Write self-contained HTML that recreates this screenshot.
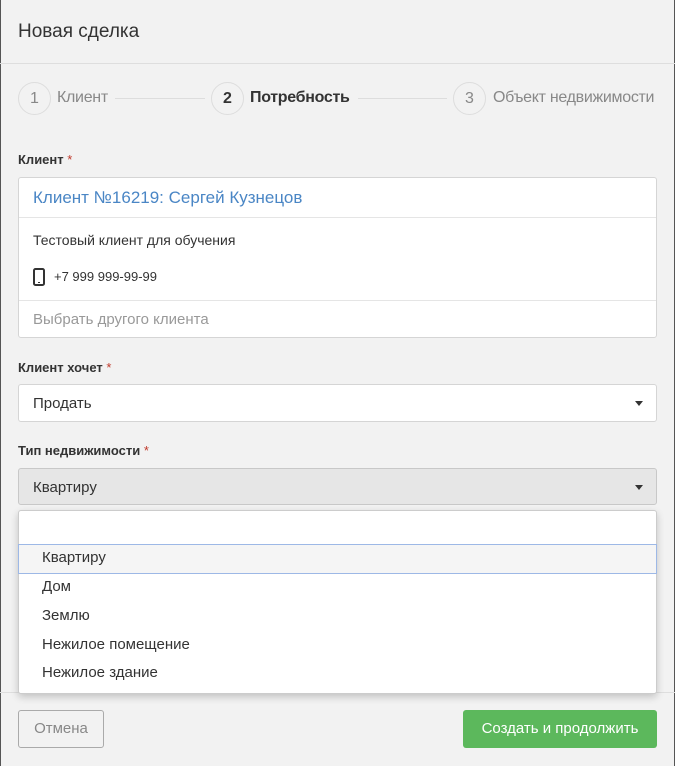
<!DOCTYPE html>
<html><head><meta charset="utf-8"><style>
*{box-sizing:border-box;margin:0;padding:0}
body{width:675px;height:766px;background:#f2f2f2;font-family:"Liberation Sans",sans-serif;color:#333;position:relative;overflow:hidden}
.a{position:absolute}
.hr{position:absolute;left:0;right:0;height:1px;background:#dedede}
.circ{position:absolute;width:33px;height:33px;border:1px solid #ddd;border-radius:50%;top:82px;text-align:center;line-height:31px;font-size:16px;color:#888}
.st{position:absolute;top:89px;font-size:16px;color:#888;letter-spacing:-0.3px}
.line{position:absolute;top:98px;height:1px;background:#ddd}
.lbl{position:absolute;left:18px;font-size:13px;font-weight:bold;color:#333}
.lbl span{color:#c0392b;font-weight:normal}
.box{position:absolute;left:18px;width:639px;border:1px solid #d5d5d5;border-radius:3px;background:#fff}
.caret{position:absolute;right:13px;top:16px;width:0;height:0;border-left:4px solid transparent;border-right:4px solid transparent;border-top:5px solid #333}
.it{position:absolute;left:23px;font-size:15px;color:#333}
</style></head><body>
<div class="a" style="left:0;top:0;width:1px;height:766px;background:#555"></div>
<div class="a" style="right:0;top:0;width:1px;height:766px;background:#555"></div>
<div class="a" style="left:18px;top:21px;font-size:19px;color:#333">Новая сделка</div>
<div class="hr" style="top:63px"></div>
<div class="circ" style="left:18px">1</div><div class="st" style="left:57px">Клиент</div>
<div class="line" style="left:115px;width:90px"></div>
<div class="circ" style="left:211px;color:#333;font-weight:bold">2</div><div class="st" style="left:250px;color:#333;font-weight:bold">Потребность</div>
<div class="line" style="left:358px;width:89px"></div>
<div class="circ" style="left:453px">3</div><div class="st" style="left:493px">Объект недвижимости</div>

<div class="lbl" style="top:152px">Клиент <span>*</span></div>
<div class="box" style="top:177px;height:161px">
 <div class="a" style="left:14px;top:10px;font-size:17px;color:#4a86c5">Клиент №16219: Сергей Кузнецов</div>
 <div class="a" style="left:0;right:0;top:39px;height:1px;background:#e5e5e5"></div>
 <div class="a" style="left:14px;top:54px;font-size:14px">Тестовый клиент для обучения</div>
 <svg class="a" style="left:14px;top:90px" width="12" height="18" viewBox="0 0 12 18"><rect x="1" y="1" width="10" height="16" rx="1.5" fill="none" stroke="#333" stroke-width="2"/><rect x="5" y="14" width="2" height="1" fill="#333"/></svg>
 <div class="a" style="left:35px;top:91px;font-size:13px">+7 999 999-99-99</div>
 <div class="a" style="left:0;right:0;top:122px;height:1px;background:#e5e5e5"></div>
 <div class="a" style="left:14px;top:133px;font-size:15px;color:#999">Выбрать другого клиента</div>
</div>

<div class="lbl" style="top:360px">Клиент хочет <span>*</span></div>
<div class="box" style="top:384px;height:38px"><div class="a" style="left:14px;top:10px;font-size:15px">Продать</div><div class="caret"></div></div>

<div class="lbl" style="top:443px">Тип недвижимости <span>*</span></div>
<div class="box" style="top:468px;height:37px;background:#e6e6e6;border-color:#c8c8c8"><div class="a" style="left:14px;top:10px;font-size:15px">Квартиру</div><div class="caret"></div></div>

<div class="hr" style="top:692px"></div>
<div class="box" style="top:510px;height:184px;box-shadow:0 3px 8px rgba(0,0,0,.2);border-color:#ccc">
 <div class="a" style="left:-1px;right:-1px;top:33px;height:30px;background:#f5f5f5;border:1px solid #9db8e6"></div>
 <div class="it" style="top:38px">Квартиру</div>
 <div class="it" style="top:67px">Дом</div>
 <div class="it" style="top:96px">Землю</div>
 <div class="it" style="top:125px">Нежилое помещение</div>
 <div class="it" style="top:153px">Нежилое здание</div>
</div>

<div class="a" style="left:18px;top:710px;width:86px;height:38px;border:1px solid #aaa;border-radius:3px;text-align:center;line-height:36px;font-size:15px;color:#888">Отмена</div>
<div class="a" style="left:463px;top:710px;width:194px;height:38px;background:#5cb85c;border-radius:3px;text-align:center;line-height:38px;font-size:15px;color:#fff">Создать и продолжить</div>
</body></html>
